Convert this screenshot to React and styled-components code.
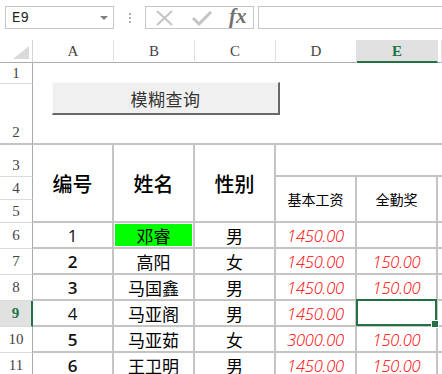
import React from "react";
import styled, { createGlobalStyle, css } from "styled-components";

const Global = createGlobalStyle`
  html, body { margin: 0; padding: 0; background: #fff; }
  body { width: 442px; height: 374px; overflow: hidden; font-family: "Noto Sans CJK SC", sans-serif; }
`;

const Page = styled.div`
  width: 442px;
  height: 374px;
  overflow: hidden;
  display: flex;
  flex-direction: column;
`;

const Toolbar = styled.div`
  flex: none;
  height: 40px;
  box-sizing: border-box;
  padding: 6px 0 0 5px;
  display: flex;
  align-items: flex-start;
`;

const NameBox = styled.div`
  width: 109px;
  height: 23px;
  box-sizing: border-box;
  border: 1px solid #c6c6c6;
  display: flex;
  align-items: center;
  justify-content: space-between;
  padding: 0 5px 0 6px;
  font-family: "Liberation Mono", monospace;
  font-size: 14px;
  color: #222;
`;

const Caret = styled.span`
  width: 0;
  height: 0;
  border-left: 4px solid transparent;
  border-right: 4px solid transparent;
  border-top: 4px solid #808080;
`;

const Dots = styled.div`
  width: 31px;
  height: 23px;
  display: flex;
  flex-direction: column;
  align-items: center;
  justify-content: center;
  gap: 2px;
`;

const Dot = styled.span`
  width: 2px;
  height: 2px;
  background: #b0b0b0;
`;

const FxBox = styled.div`
  width: 109px;
  height: 23px;
  box-sizing: border-box;
  border: 1px solid #c6c6c6;
  display: flex;
  align-items: center;
  padding-left: 10px;
  gap: 19px;
`;

const FxText = styled.span`
  font-family: "Liberation Serif", serif;
  font-style: italic;
  font-weight: bold;
  font-size: 21px;
  color: #707070;
  line-height: 1;
  margin-left: -2px;
  margin-top: -2px;
`;

const FormulaInput = styled.div`
  flex: 1;
  margin-left: 4px;
  height: 23px;
  box-sizing: border-box;
  border: 1px solid #c6c6c6;
  border-right: none;
`;

const Sheet = styled.div`
  flex: none;
  display: grid;
  grid-template-columns: 33px repeat(5, 81px) 1fr;
  grid-template-rows: 23px 21px 61px 32px 23px 23px repeat(6, 26px);
`;

const Corner = styled.div`
  box-sizing: border-box;
  border-right: 1px solid #d4d4d4;
  border-bottom: 1px solid #ababab;
  display: flex;
  align-items: flex-end;
  justify-content: flex-end;
  padding: 0 3px 3px 0;
`;

const CornerTri = styled.div`
  width: 0;
  height: 0;
  border-left: 16px solid transparent;
  border-bottom: 13px solid #dadada;
`;

const ColHead = styled.div`
  box-sizing: border-box;
  border-right: 1px solid #e0e0e0;
  border-bottom: 1px solid #ababab;
  display: flex;
  align-items: center;
  justify-content: center;
  font-family: "Liberation Serif", serif;
  font-size: 15px;
  color: #444;
  padding-top: 1px;
  ${(p) =>
    p.$sel &&
    css`
      background: #e1e1e1;
      border-bottom: 2px solid #217346;
      color: #217346;
      font-weight: bold;
    `}
`;

const RowHead = styled.div`
  grid-column: 1;
  box-sizing: border-box;
  border-right: 1px solid #ababab;
  border-bottom: ${(p) => (p.$thick ? "2px solid #c4c4c4" : "1px solid #dadada")};
  display: flex;
  align-items: ${(p) => (p.$bottom ? "flex-end" : "center")};
  justify-content: center;
  font-family: "Liberation Serif", serif;
  font-size: 15px;
  color: #444;
  padding-bottom: ${(p) => (p.$bottom ? "2px" : "0")};
  ${(p) =>
    p.$sel &&
    css`
      background: #e1e1e1;
      border-right: 2px solid #217346;
      color: #217346;
      font-weight: bold;
    `}
`;

const TopArea = styled.div`
  grid-row: 2 / 4;
  grid-column: 2 / 8;
  box-sizing: border-box;
  border-bottom: 2px solid #c4c4c4;
  padding: 19px 0 0 19px;
`;

const MacroButton = styled.div`
  width: 228px;
  height: 33px;
  box-sizing: border-box;
  background: #f0f0f0;
  border-top: 1px solid #f8f8f8;
  border-left: 1px solid #f8f8f8;
  border-right: 2px solid #696969;
  border-bottom: 2px solid #696969;
  display: flex;
  align-items: center;
  justify-content: center;
  font-family: "Noto Sans CJK SC", sans-serif;
  font-size: 17px;
  color: #333;
  letter-spacing: 0.5px;
`;

/* A table cell; $row / $col give its grid area (merged cells span several tracks). */
const Cell = styled.div`
  grid-row: ${(p) => p.$row};
  grid-column: ${(p) => p.$col};
  box-sizing: border-box;
  border-right: ${(p) => (p.$open ? "none" : "2px solid #c4c4c4")};
  border-bottom: 2px solid #c4c4c4;
  display: flex;
  align-items: center;
  justify-content: center;
  position: relative;
  z-index: ${(p) => (p.$sel ? 1 : "auto")};
  color: #000;
  font-family: "Noto Sans CJK SC", sans-serif;
  font-size: 17px;
`;

const TitleCell = styled(Cell)`
  font-size: 20px;
  font-weight: 500;
`;

const SubTitleCell = styled(Cell)`
  font-size: 14px;
`;

const GreenFill = styled.div`
  position: absolute;
  inset: 1px;
  background: #00ff00;
`;

const CellText = styled.span`
  position: relative;
`;

const Money = styled.span`
  font-family: "Open Sans", sans-serif;
  font-style: italic;
  font-weight: 300;
  font-size: 16.5px;
  color: #ff0000;
  letter-spacing: -0.2px;
`;

const Num = styled.span`
  font-family: "Open Sans", sans-serif;
  font-size: 17px;
  font-weight: ${(p) => (p.$bold ? 600 : 400)};
  color: #111;
`;

const SelBox = styled.div`
  position: absolute;
  left: -1px;
  top: -2px;
  right: -1px;
  bottom: -1px;
  border: 2px solid #217346;
`;

const Handle = styled.div`
  position: absolute;
  right: -4px;
  bottom: -4px;
  width: 6px;
  height: 6px;
  background: #217346;
  border: 1px solid #fff;
  z-index: 2;
`;

const rows = [
  { n: "1", bold: false, name: "邓睿", sex: "男", base: "1450.00", bonus: "", green: true },
  { n: "2", bold: true, name: "高阳", sex: "女", base: "1450.00", bonus: "150.00" },
  { n: "3", bold: true, name: "马国鑫", sex: "男", base: "1450.00", bonus: "150.00" },
  { n: "4", bold: false, name: "马亚阁", sex: "男", base: "1450.00", bonus: "", sel: true },
  { n: "5", bold: true, name: "马亚茹", sex: "女", base: "3000.00", bonus: "150.00" },
  { n: "6", bold: true, name: "王卫明", sex: "男", base: "1450.00", bonus: "150.00" },
];

const XIcon = () => (
  <svg width="17" height="16" viewBox="0 0 17 16">
    <path d="M1 1 L16 15 M16 1 L1 15" stroke="#c4c4c4" strokeWidth="2" fill="none" />
  </svg>
);

const CheckIcon = () => (
  <svg width="20" height="16" viewBox="0 0 20 16">
    <path d="M1 8 L7 14 L19 2" stroke="#c4c4c4" strokeWidth="3" fill="none" />
  </svg>
);

const columns = ["A", "B", "C", "D", "E", ""];

export default function App() {
  return (
    <Page>
      <Global />
      <Toolbar>
        <NameBox>
          E9
          <Caret />
        </NameBox>
        <Dots>
          <Dot />
          <Dot />
          <Dot />
        </Dots>
        <FxBox>
          <XIcon />
          <CheckIcon />
          <FxText>fx</FxText>
        </FxBox>
        <FormulaInput />
      </Toolbar>
      <Sheet>
        <Corner>
          <CornerTri />
        </Corner>
        {columns.map((c, i) => (
          <ColHead key={i} $sel={c === "E"}>
            {c}
          </ColHead>
        ))}

        <RowHead>1</RowHead>
        <TopArea>
          <MacroButton>模糊查询</MacroButton>
        </TopArea>
        <RowHead $bottom $thick>2</RowHead>

        <RowHead $bottom>3</RowHead>
        <RowHead>4</RowHead>
        <RowHead>5</RowHead>

        <TitleCell $row="4 / 7" $col="2">编号</TitleCell>
        <TitleCell $row="4 / 7" $col="3">姓名</TitleCell>
        <TitleCell $row="4 / 7" $col="4">性别</TitleCell>
        <Cell $row="4" $col="5 / 8" $open />
        <SubTitleCell $row="5 / 7" $col="5">基本工资</SubTitleCell>
        <SubTitleCell $row="5 / 7" $col="6">全勤奖</SubTitleCell>
        <Cell $row="5 / 7" $col="7" $open />

        {rows.map((r, i) => {
          const gr = String(i + 7);
          return (
            <React.Fragment key={r.n}>
              <RowHead $sel={r.sel}>{i + 6}</RowHead>
              <Cell $row={gr} $col="2">
                <Num $bold={r.bold}>{r.n}</Num>
              </Cell>
              <Cell $row={gr} $col="3">
                {r.green && <GreenFill />}
                <CellText>{r.name}</CellText>
              </Cell>
              <Cell $row={gr} $col="4">{r.sex}</Cell>
              <Cell $row={gr} $col="5">
                <Money>{r.base}</Money>
              </Cell>
              <Cell $row={gr} $col="6" $sel={r.sel}>
                {r.bonus && <Money>{r.bonus}</Money>}
                {r.sel && (
                  <SelBox>
                    <Handle />
                  </SelBox>
                )}
              </Cell>
              <Cell $row={gr} $col="7" $open />
            </React.Fragment>
          );
        })}
      </Sheet>
    </Page>
  );
}
